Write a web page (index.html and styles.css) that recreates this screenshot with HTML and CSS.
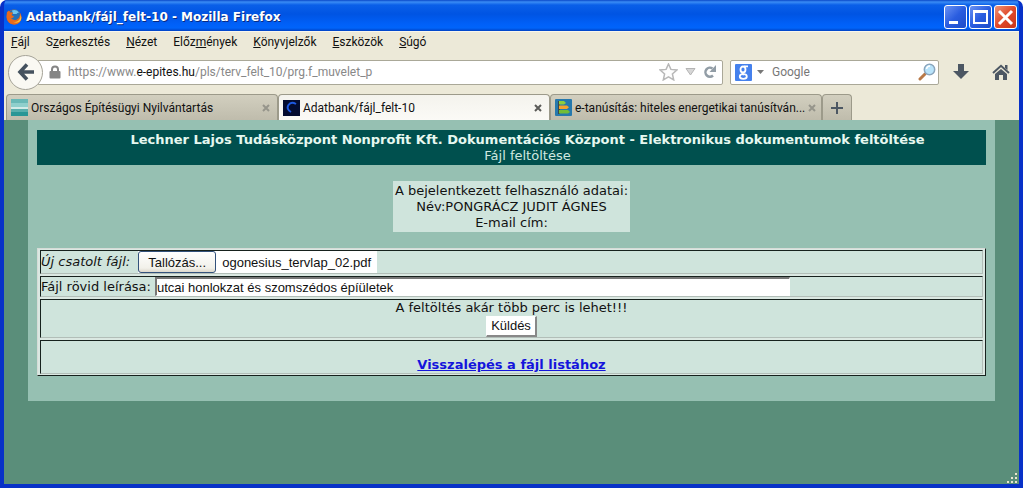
FILE: index.html
```html
<!DOCTYPE html>
<html lang="hu">
<head>
<meta charset="utf-8">
<title>Adatbank/fájl_felt-10</title>
<link rel="stylesheet" href="styles.css">
</head>
<body>
<div class="window">
  <header class="titlebar">
    <svg class="app-icon" width="16" height="16" viewBox="0 0 16 16" aria-hidden="true">
      <circle cx="8" cy="8" r="7.5" fill="#e8631a"/>
      <circle cx="8.500" cy="6" r="5.800" fill="#2470b8"/>
      <path d="M6 1.500q4-1.500 7 2-2 0-2.500 1.500L7 5z" fill="#6fc4ee"/>
      <path d="M1 3 3 1.500 4 3.500q2-.5 3 .5L5.500 6 8 7.500q-1 2-3 1.500 2.500 3 6 1.500 3-1.500 3-5.500 3 5-.5 8.500T4.500 14.500Q-.5 11 1 3z" fill="#e96a1c"/>
      <path d="M14 5q1.500 4-2 7-3.500 2-6.500 0 6 4 9.500-1 1-3-1-6z" fill="#fbc437"/>
    </svg>
    <h1 class="window-title">Adatbank/fájl_felt-10 - Mozilla Firefox</h1>
    <button class="win-button" aria-label="Kis méret"><svg width="21" height="21" viewBox="0 0 21 21"><path fill="#fff" d="M4 14h9v3H4z"/></svg></button>
    <button class="win-button" aria-label="Teljes méret"><svg width="21" height="21" viewBox="0 0 21 21"><path fill="#fff" fill-rule="evenodd" d="M3 3h15v14H3zM5 6v9h11V6z"/></svg></button>
    <button class="win-button close" aria-label="Bezárás"><svg width="21" height="21" viewBox="0 0 21 21"><path stroke="#fff" stroke-width="3" d="m4 4 13 13M17 4 4 17"/></svg></button>
  </header>

  <div class="chrome">
    <nav class="menubar">
      <button class="menu"><u>F</u>ájl</button>
      <button class="menu">S<u>z</u>erkesztés</button>
      <button class="menu"><u>N</u>ézet</button>
      <button class="menu">Előz<u>m</u>ények</button>
      <button class="menu"><u>K</u>önyvjelzők</button>
      <button class="menu"><u>E</u>szközök</button>
      <button class="menu"><u>S</u>úgó</button>
    </nav>

    <div class="toolbar">
      <button class="back" aria-label="Vissza"><svg width="18" height="18" viewBox="0 0 18 18"><path fill="none" stroke="#45525f" stroke-width="3.600" d="M10 1.500 3 9l7 7.500M3 9h14"/></svg></button>
      <div class="field url">
        <svg width="12" height="14" viewBox="0 0 12 14" aria-hidden="true"><path d="M3 7V4.500a3 3 0 0 1 6 0V7" fill="none" stroke="#858585" stroke-width="2"/><rect x=".5" y="6" width="11" height="7.500" rx="1" fill="#858585"/></svg>
        <span class="address">https://www.<b>e-epites.hu</b>/pls/terv_felt_10/prg.f_muvelet_p</span>
        <svg width="19" height="18" viewBox="0 0 19 18" aria-hidden="true"><path fill="#fdfdfd" stroke="#b8b8b8" stroke-width="1.500" d="m9.500 1 2.400 5.400 5.900.6-4.400 4 1.300 5.900-5.200-3-5.200 3L5.600 11 1.200 7l5.900-.6z"/></svg>
        <svg width="11" height="8" viewBox="0 0 11 8" aria-hidden="true"><path d="M1 .5h9L5.500 7z" fill="#d6d6d6" stroke="#b4b4b4"/></svg>
        <svg width="14" height="14" viewBox="0 0 14 14" aria-hidden="true"><path fill="none" stroke="#929da6" stroke-width="2.500" d="M9.500 3.500A4.500 4.500 0 1 0 10 10.500"/><path fill="#929da6" d="M13 0v7H6.500z"/></svg>
      </div>
      <div class="field search">
        <svg width="17" height="17" viewBox="0 0 17 17" aria-hidden="true"><rect width="17" height="17" rx="1" fill="#4581ed"/><g fill="none" stroke="#fff" stroke-width="1.800"><ellipse cx="8" cy="5.500" rx="2.500" ry="3"/><path d="M9 2.300h4M8 8.500q-1.500 1.500 1 2.200"/><ellipse cx="8.300" cy="12.500" rx="3.500" ry="2.300"/></g></svg>
        <svg width="7" height="5" viewBox="0 0 7 5" aria-hidden="true"><path d="M0 0h7L3.500 4z" fill="#777"/></svg>
        <input class="search-input" type="text" placeholder="Google" aria-label="Keresés">
        <svg width="18" height="18" viewBox="0 0 18 18" aria-hidden="true"><path stroke="#b87948" stroke-width="3" stroke-linecap="round" d="m7 11-5 5"/><circle cx="11.500" cy="6.500" r="5.200" fill="#b9e4fb" stroke="#8ba6bd" stroke-width="1.500"/><path d="M8.500 6q.5-3 3.500-3" fill="none" stroke="#fff" stroke-width="1.500"/></svg>
      </div>
      <button class="tool" aria-label="Letöltések"><svg width="16" height="16" viewBox="0 0 16 16"><path fill="#4c5763" d="M5 0h6v7h5l-8 8-8-8h5z"/></svg></button>
      <button class="tool" aria-label="Kezdőlap"><svg width="18" height="16" viewBox="0 0 18 16"><path fill="none" stroke="#4c5763" stroke-width="2" d="M1 9 9 1.800 17 9"/><path fill="#4c5763" d="M9 5 3 10v6h4v-5h4v5h4v-6zM13 1h2.500v5L13 4z"/></svg></button>
    </div>

    <div class="tabs">
      <div class="tab">
        <svg width="17" height="17" viewBox="0 0 17 17" aria-hidden="true"><path fill="#69b9b7" d="M0 0h17v17H0z"/><path fill="#8fcfcc" d="M0 4h17v4H0z"/><path fill="#d2ebe8" d="M0 8h17v2H0z"/><path fill="#58aeac" d="M0 10h17v3H0z"/><path fill="#2a9696" d="M0 13h17v4H0z"/></svg>
        <span class="tab-title">Országos Építésügyi Nyilvántartás</span>
        <button class="tab-close" aria-label="Lap bezárása"><svg width="8" height="8" viewBox="0 0 8 8"><path d="m1 1 6 6M7 1 1 7"/></svg></button>
      </div>
      <div class="tab active">
        <svg width="17" height="16" viewBox="0 0 17 16" aria-hidden="true"><path fill="#030c30" d="M0 0h17v16H0z"/><path fill="none" stroke="#1e59e0" stroke-width="2" d="M13 4Q8 1 5.500 5T8 12"/></svg>
        <span class="tab-title">Adatbank/fájl_felt-10</span>
        <button class="tab-close" aria-label="Lap bezárása"><svg width="8" height="8" viewBox="0 0 8 8"><path d="m1 1 6 6M7 1 1 7"/></svg></button>
      </div>
      <div class="tab">
        <svg width="17" height="17" viewBox="0 0 17 17" aria-hidden="true"><rect width="17" height="17" rx="1" fill="#2679ad"/><path fill="#39474a" d="M3 2h2v13H3z"/><path fill="#8fce3e" d="M4 2h5l2 2-2 1.500H4z"/><path fill="#f6a32b" d="M4 6.500h8l2 1.700-2 1.800H4z"/><path fill="#73bd37" d="M4 11h9l2 2-2 1.500H4z"/></svg>
        <span class="tab-title">e-tanúsítás: hiteles energetikai tanúsítván...</span>
        <button class="tab-close" aria-label="Lap bezárása"><svg width="8" height="8" viewBox="0 0 8 8"><path d="m1 1 6 6M7 1 1 7"/></svg></button>
      </div>
      <button class="tab new-tab" aria-label="Új lap"><svg width="12" height="12" viewBox="0 0 12 12"><path stroke="#4c5763" stroke-width="2" d="M6 0v12M0 6h12"/></svg></button>
    </div>
  </div>

  <main class="viewport">
    <div class="page">
      <div class="banner">
        <h2 class="banner-title">Lechner Lajos Tudásközpont Nonprofit Kft. Dokumentációs Központ - Elektronikus dokumentumok feltöltése</h2>
        <p>Fájl feltöltése</p>
      </div>
      <div class="user">
        <p>A bejelentkezett felhasználó adatai:</p>
        <p>Név:PONGRÁCZ JUDIT ÁGNES</p>
        <p>E-mail cím:</p>
      </div>
      <form class="upload">
        <div class="row attach">
          <label class="file-label" for="browse">Új csatolt fájl:</label>
          <span class="file"><button class="browse" id="browse" type="button">Tallózás...</button><span class="file-name">ogonesius_tervlap_02.pdf</span></span>
        </div>
        <div class="row">
          <label for="desc">Fájl rövid leírása:</label>
          <input class="desc" id="desc" type="text" value="utcai honlokzat és szomszédos épíületek">
        </div>
        <div class="row stacked">
          <p>A feltöltés akár több perc is lehet!!!</p>
          <button class="send" type="button">Küldés</button>
        </div>
        <div class="row stacked last">
          <a class="back-link" href="#">Visszalépés a fájl listához</a>
        </div>
      </form>
    </div>
    <svg class="grip" width="10" height="10" viewBox="0 0 10 10" aria-hidden="true"><path fill="#e9e6cf" d="M8 0h2v2H8zM4 4h2v2H4zM8 4h2v2H8zM0 8h2v2H0zM4 8h2v2H4zM8 8h2v2H8z"/></svg>
  </main>
</div>
</body>
</html>
```
FILE: styles.css
```css
* { box-sizing: border-box; }

body {
  margin: 0;
  background: #fff;
  font: 12px/16px Roboto, sans-serif;
  color: #111;
}

p, h1, h2 { margin: 0; font-size: inherit; }
button { font: inherit; color: inherit; padding: 0; border: 0; background: none; }
svg { display: block; flex: none; }

.window {
  display: flex;
  flex-direction: column;
  min-height: 100vh;
  border: solid #0831c8;
  border-width: 0 4px 4px;
  border-radius: 7px 7px 0 0;
  background: #0054e3;
  overflow: hidden;
}

/* Title bar */
.titlebar {
  display: flex;
  align-items: center;
  gap: 2px;
  height: 31px;
  padding: 3px 2px 0;
  background: linear-gradient(#0a48c8 0, #3a8cf5 2px, #0a5fe8 5px, #0054e3 14px, #0060f8 24px, #0064fa 28px, #0042c4 31px);
}

.window-title {
  flex: 1;
  padding-left: 2px;
  font: bold 12px/16px "DejaVu Sans", sans-serif;
  color: #fff;
  text-shadow: 1px 1px #0a2a80;
}

.win-button {
  display: grid;
  place-items: center;
  width: 23px;
  height: 24px;
  border: 1px solid #fff;
  border-radius: 3px;
  background: linear-gradient(135deg, #6b93f3, #2a5de0 50%, #1d4cc8);
}

.win-button.close { background: linear-gradient(135deg, #ee9478, #e0492a 50%, #c8371a); }

/* Browser chrome */
.chrome {
  background: #ece9d8;
  border-top: 1px solid #f8f6ec;
}

.menubar { display: flex; gap: 16px; padding: 2px 7px 4px; }
.menu { line-height: 16px; }

.toolbar { display: flex; align-items: center; height: 36px; padding: 0 9px 0 4px; }

.back {
  display: grid;
  place-items: center;
  width: 35px;
  height: 35px;
  border: 1px solid #a5a398;
  border-radius: 50%;
  background: #faf9f3;
  z-index: 1;
}

.field {
  display: flex;
  align-items: center;
  height: 25px;
  border: 1px solid #aaa898;
  border-radius: 2px;
  background: #fff;
}

.url { flex: 1; gap: 7px; margin-left: -6px; padding: 0 5px 0 11px; }
.address { flex: 1; color: #888; white-space: nowrap; }
.address b { font-weight: normal; color: #111; }
.search { width: 209px; margin: 0 13px 0 7px; padding: 0 2px 0 4px; gap: 5px; }
.search-input { flex: 1; min-width: 0; border: 0; padding: 0 3px; background: none; font: inherit; }
.search-input::placeholder { color: #777; opacity: 1; }
.tool { display: grid; place-items: center; width: 18px; }
.tool + .tool { margin-left: 22px; }

.tabs { display: flex; padding: 4px 2px 0; height: 30px; }

.tab {
  display: flex;
  align-items: center;
  gap: 3px;
  width: 272px;
  padding: 0 7px 0 4px;
  border: 1px solid #9c9a8a;
  border-bottom: 0;
  border-radius: 4px 4px 0 0;
  background: linear-gradient(#d2cfbf, #bfbcac);
}

.tab.active { background: linear-gradient(#f4f3ed, #fbfaf6); }
.tab-title { flex: 1; white-space: nowrap; }
.tab-close svg { fill: none; stroke: #96958b; stroke-width: 2; }
.active .tab-close svg { stroke: #5b5b58; }
.new-tab { justify-content: center; width: 30px; padding: 0; }

/* Page */
.viewport {
  position: relative;
  flex: 1;
  padding: 0 24px 20px;
  background: #5a8e7a;
  font: 13px/16px "DejaVu Sans", sans-serif;
}

.page { padding: 10px 9px 25px; background: #96c0b2; }

.banner {
  padding: 2px 0 1px 32px;
  background: #00504e;
  color: #cfe8e0;
  text-align: center;
}

.banner-title { font: bold 13px/16px "DejaVu Sans", sans-serif; color: #e6f8f0; }

.user {
  width: fit-content;
  margin: 16px auto;
  padding: 2px 2px 1px;
  background: #cfe4dc;
  text-align: center;
}

.upload {
  display: flex;
  flex-direction: column;
  gap: 2px;
  padding: 1px 2px;
  border: 1px solid;
  border-color: #d6dcd8 #16211d #16211d #d6dcd8;
  background: #dbe8e2;
}

.row {
  display: flex;
  align-items: center;
  gap: 4px;
  border: 1px solid;
  border-color: #16211d #b2beb8 #b2beb8 #16211d;
  background: #cfe4dc;
}

.attach { gap: 8px; }
.file-label { font-style: italic; }

.file {
  display: flex;
  align-items: center;
  background: #fff;
  font: 13px/15px "Liberation Sans", sans-serif;
}

.browse {
  width: 78px;
  height: 22px;
  border: 1px solid #33527c;
  border-radius: 3px;
  background: linear-gradient(#fff, #f2f1ea 80%, #dcd8cc);
}

.file-name { padding: 0 6px; }

.desc {
  width: 67.500%;
  height: 19px;
  padding: 0;
  border: solid;
  border-width: 2px 1px 1px 2px;
  border-color: #777 #fff #fff #777;
  background: #fff;
  font: 13px/16px "Liberation Sans", sans-serif;
  color: #111;
}

.stacked { flex-direction: column; gap: 0; }

.send {
  padding: 1px 4px;
  border: solid;
  border-width: 1px 2px 2px 1px;
  border-color: #fff #888 #888 #fff;
  background: #fff;
  font: 13px/16px "Liberation Sans", sans-serif;
}

.last { padding-top: 16px; }
.back-link { font-weight: bold; color: #1414dc; }

.grip { position: absolute; right: 2px; bottom: 1px; }
```
